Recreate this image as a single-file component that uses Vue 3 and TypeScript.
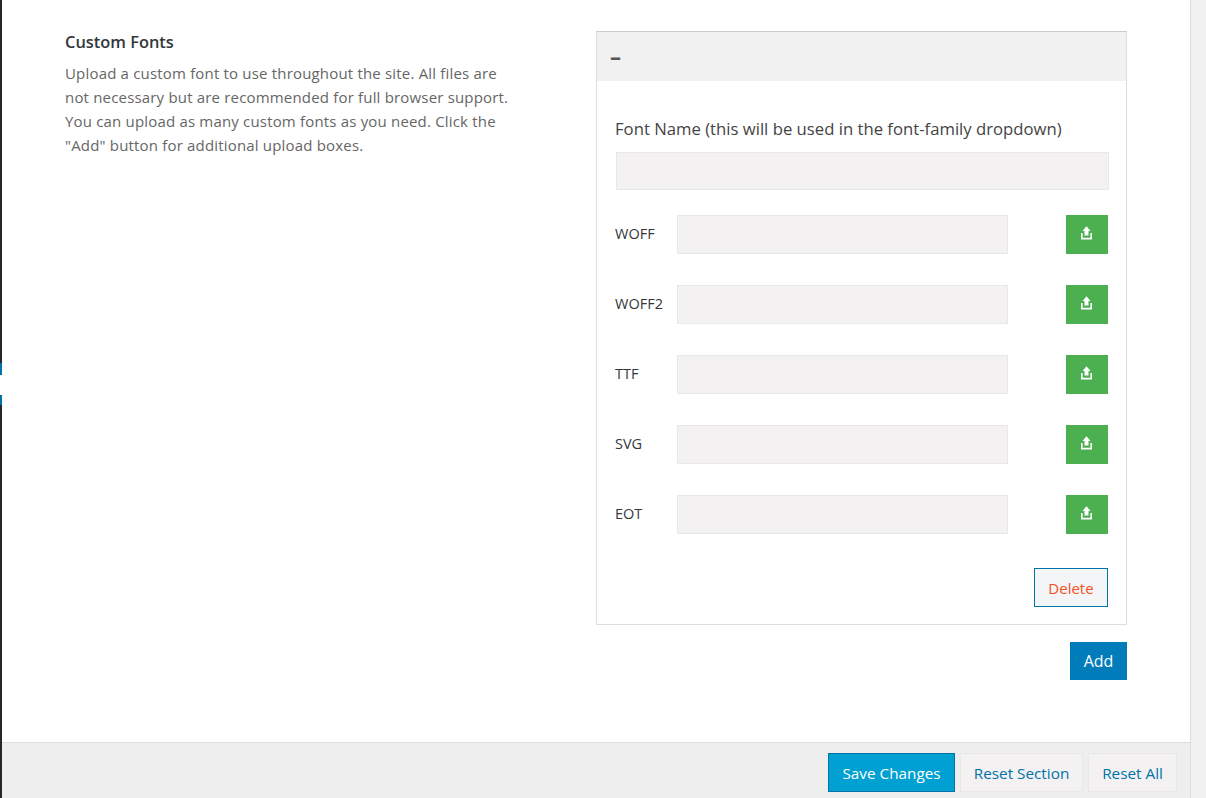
<script setup lang="ts">
const rows: string[] = ['WOFF', 'WOFF2', 'TTF', 'SVG', 'EOT']
const lines: string[] = [
  'Upload a custom font to use throughout the site. All files are',
  'not necessary but are recommended for full browser support.',
  'You can upload as many custom fonts as you need. Click the',
  '"Add" button for additional upload boxes.',
]
</script>

<template>
  <div class="page">
    <div class="strip"><span class="marker"></span></div>
    <div class="main">
      <div class="content">
        <div class="intro">
          <h3 class="title">Custom Fonts</h3>
          <p v-for="line in lines" :key="line" class="line">{{ line }}</p>
        </div>
        <div class="field">
          <div class="panel">
            <div class="panel-head"><span class="dash">–</span></div>
            <div class="panel-body">
              <label class="name-label">Font Name (this will be used in the font-family dropdown)</label>
              <div class="name-input"></div>
              <div v-for="row in rows" :key="row" class="row">
                <span class="row-label">{{ row }}</span>
                <div class="row-input"></div>
                <button class="upload" type="button" :aria-label="'Upload ' + row">
                  <svg width="11" height="14" viewBox="0 0 11 14">
                    <path d="M5.5 0.3 L9.5 5 H7.5 V9.5 H3.5 V5 H1.5 Z" fill="#fff" />
                    <path d="M0.8 7 V12.6 H10.2 V7" fill="none" stroke="#fff" stroke-width="1.6" />
                  </svg>
                </button>
              </div>
              <div class="delete-wrap"><button class="delete" type="button">Delete</button></div>
            </div>
          </div>
          <div class="add-wrap"><button class="add" type="button">Add</button></div>
        </div>
      </div>
      <div class="footer">
        <button class="save" type="button">Save Changes</button>
        <button class="reset rs" type="button">Reset Section</button>
        <button class="reset ra" type="button">Reset All</button>
      </div>
    </div>
    <div class="side"></div>
  </div>
</template>

<style>
html, body { margin: 0; padding: 0; background: #fff; overflow: hidden; }
</style>

<style scoped>
.page {
  display: flex;
  width: 1206px;
  height: 798px;
  overflow: hidden;
  font-family: "Open Sans", "Noto Sans", sans-serif;
  color: #444;
}
.strip { width: 2px; background: #23282d; position: relative; flex: none; }
.marker {
  position: absolute; left: 0; top: 363px; width: 2px; height: 42px;
  background: linear-gradient(#0073aa 0 12px, #fff 12px 32px, #0073aa 32px);
}
.main { width: 1188px; flex: none; display: flex; flex-direction: column; border-right: 1px solid #ddd; }
.side { flex: 1; background: #f1f1f1; }
.content { height: 742px; flex: none; display: flex; background: #fff; box-sizing: border-box; padding: 31px 0 0 63px; }
.intro { width: 531px; flex: none; }
.title { margin: 0 0 8px; font-size: 16.4px; line-height: 22px; font-weight: 600; color: #32373c; }
.line { margin: 0; font-size: 15px; letter-spacing: 0.18px; line-height: 24px; color: #666; white-space: nowrap; }
.field { width: 531px; flex: none; }
.panel { border: 1px solid #ddd; border-top-color: #ccc; height: 594px; box-sizing: border-box; }
.panel-head { height: 49px; background: #f1f1f1; padding: 0 13px; display: flex; align-items: center; }
.dash { font-size: 22px; font-weight: 700; color: #555; line-height: 1; position: relative; top: -1px; }
.panel-body { padding: 36px 17px 0 18px; }
.name-label { display: block; font-size: 16.7px; line-height: 24px; color: #444; white-space: nowrap; }
.name-input { height: 38px; margin: 11px 0 25px 1px; background: #f3f1f2; border: 1px solid #e8e8e8; box-sizing: border-box; }
.row { display: flex; align-items: center; height: 39px; margin-bottom: 31px; }
.row-label { width: 62px; flex: none; font-size: 14.5px; color: #32373c; padding-bottom: 3px; }
.row-input { width: 331px; height: 39px; flex: none; background: #f3f1f2; border: 1px solid #e8e8e8; box-sizing: border-box; }
.upload { width: 42px; height: 39px; margin-left: 58px; background: #4caf50; border: 0; padding: 0 1px 4px 0; display: flex; align-items: center; justify-content: center; }
.delete-wrap { display: flex; justify-content: flex-end; margin: 34px 1px 0 0; }
.delete { width: 74px; height: 39px; background: #f3f5f6; border: 1px solid #0073aa; color: #f4511e; font: inherit; font-size: 15px; padding: 0; }
.add-wrap { display: flex; justify-content: flex-end; margin-top: 17px; }
.add { width: 57px; height: 38px; background: #007cba; border: 0; color: #fff; font: inherit; font-size: 16px; padding: 0; }
.footer { flex: 1; background: #eee; border-top: 1px solid #ddd; display: flex; justify-content: flex-end; align-items: flex-start; gap: 5px; padding: 10px 13px 0 0; }
.footer button { font: inherit; font-size: 15.3px; height: 39px; padding: 0; box-sizing: border-box; }
.save { width: 127px; background: #00a0d2; border: 1px solid #0073aa; color: #fff; }
.reset { background: #f3f1f1; border: 1px solid #e8e8e8; color: #0073aa; }
.rs { width: 123px; }
.ra { width: 89px; }
</style>
